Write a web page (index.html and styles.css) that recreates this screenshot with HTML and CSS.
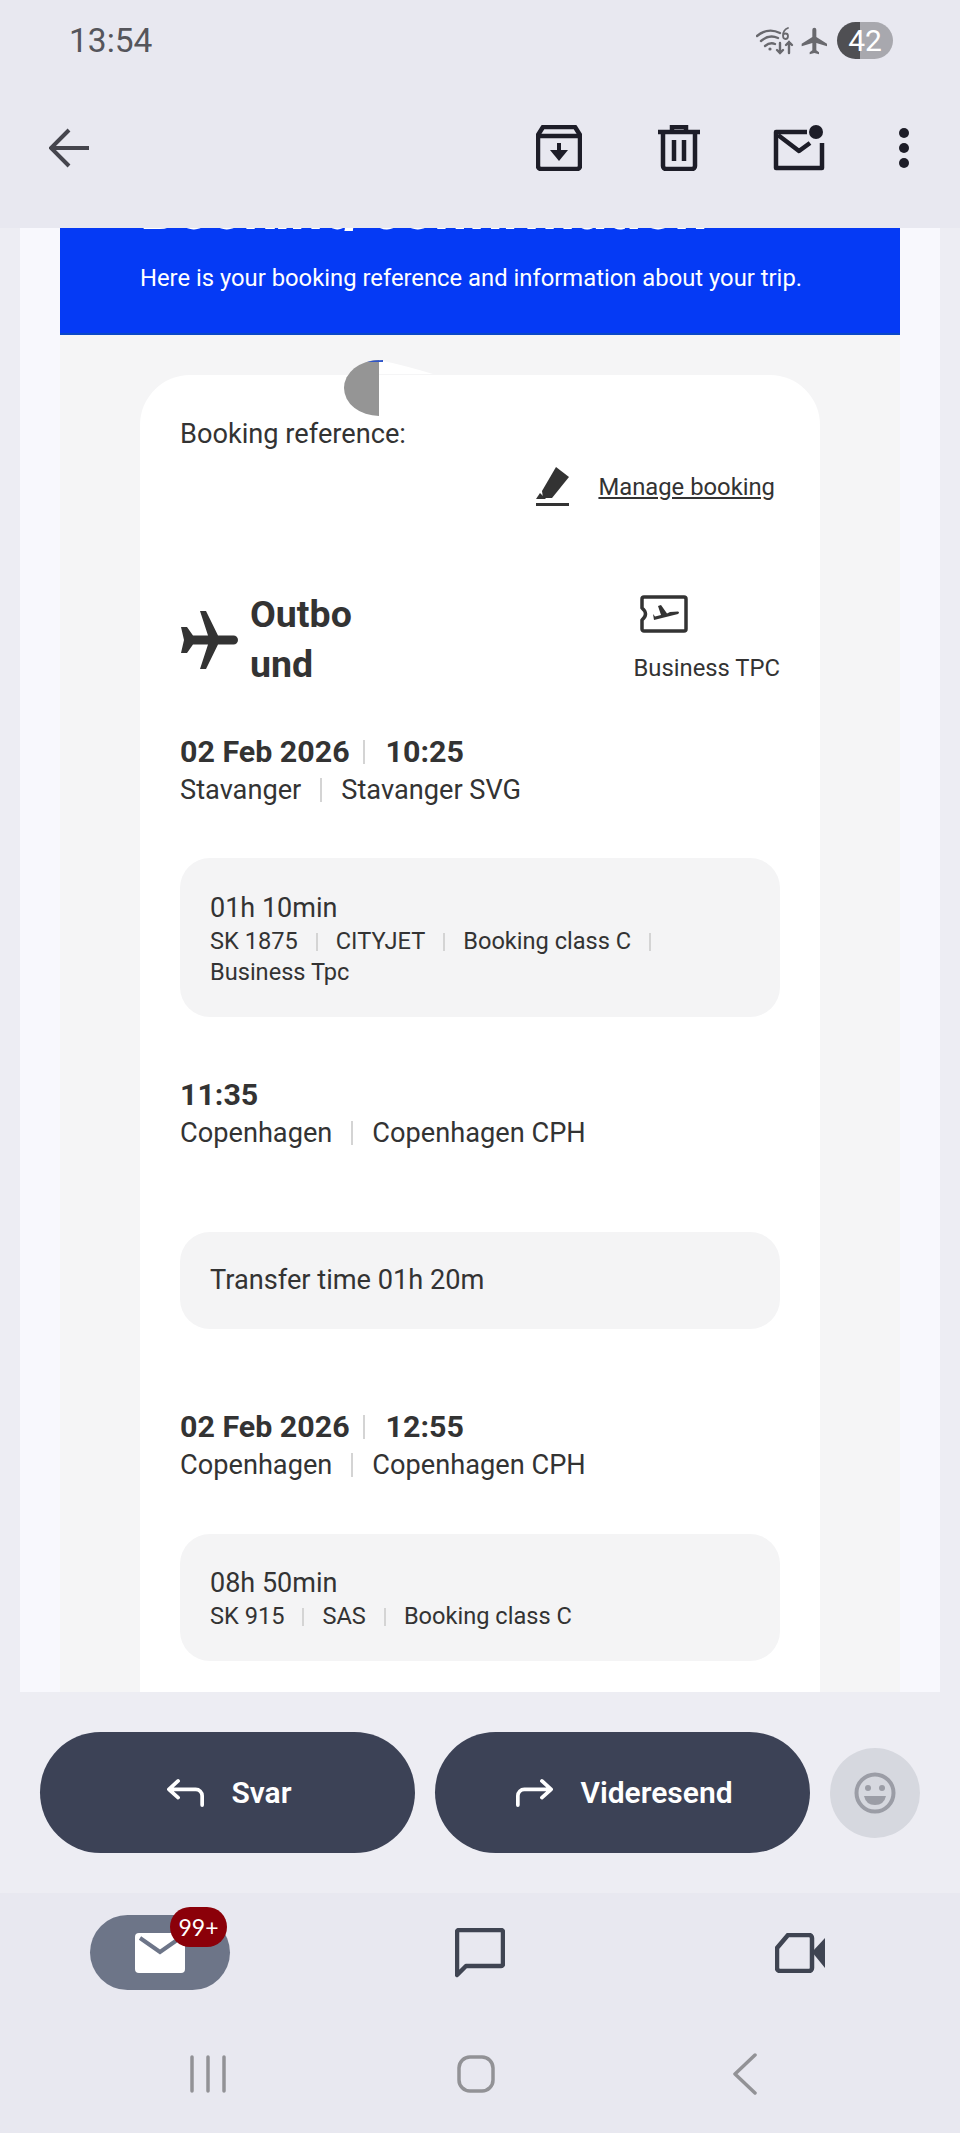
FILE: index.html
```html
<!DOCTYPE html>
<html lang="en">
<head>
    <meta charset="UTF-8">
    <meta name="viewport" content="width=device-width, initial-scale=1.0">
    <title>Booking confirmation</title>
    <link rel="stylesheet" href="styles.css">
</head>
<body>
<div class="phone">
    <div class="topbar">
        <div class="status">
            <span class="clock">13:54</span>
            <div class="status-icons">
                <svg class="wifi" viewBox="0 0 38 28" fill="none" stroke="#69696e" stroke-width="2.4" stroke-linecap="round">
                    <path d="M1 9Q12 0 24 6"/>
                    <path d="M5 14Q13 7 22 11"/>
                    <path d="M9 19Q14 15 19 17"/>
                    <circle cx="14" cy="22" r="1.6" fill="#69696e" stroke="none"/>
                    <path d="M24 16V26M21 23l3 3 3-3M33 26V15M30 18l3-3 3 3"/>
                    <path d="M32 1Q27 3 27 8.500Q27 12 29.500 12Q32 12 32 9Q32 6.500 29.500 6.500Q27.500 6.500 27 8.500" stroke-width="1.800"/>
                </svg>
                <svg class="air" viewBox="0 0 24 24" fill="#69696e"><path d="M21 16v-2l-8-5V3.500a1.500 1.500 0 0 0-3 0V9l-8 5v2l8-2.500V19l-2 1.500V22l3.500-1 3.500 1v-1.500L13 19v-5.500z"/></svg>
                <div class="battery"><span>42</span></div>
            </div>
        </div>
        <div class="toolbar">
            <svg class="back" viewBox="0 0 40 40" fill="none" stroke="#45454d" stroke-width="4"><path d="M40 20H3M20 2L2 20l18 18"/></svg>
            <div class="actions">
                <svg class="archive" viewBox="0 0 46 46" fill="none" stroke="#1d1d28" stroke-width="4.500" stroke-linejoin="round">
                    <path d="M7 2h32l5 8v31a3 3 0 0 1-3 3H5a3 3 0 0 1-3-3V10z"/>
                    <path d="M2 11h42"/>
                    <path d="M23 18v14" stroke-width="4"/>
                    <path d="M14 25h18l-9 11z" fill="#1d1d28" stroke="none"/>
                </svg>
                <svg class="trash" viewBox="0 0 42 46" fill="none" stroke="#1d1d28" stroke-width="4.500">
                    <path d="M0 7h42M14 7V2h14v5" />
                    <path d="M5 7v34a3 3 0 0 0 3 3h26a3 3 0 0 0 3-3V7"/>
                    <path d="M16 15v21M26 15v21"/>
                </svg>
                <svg class="unread" viewBox="0 0 52 46" fill="none" stroke="#1d1d28" stroke-width="4.500" stroke-linejoin="round">
                    <path d="M34 7H3v36h46V18"/>
                    <path d="M5 10l21 16 11-8"/>
                    <circle cx="43" cy="7" r="7" fill="#1d1d28" stroke="none"/>
                </svg>
                <div class="dots"><i></i><i></i><i></i></div>
            </div>
        </div>
    </div>

    <div class="mail-view">
        <div class="mail-frame">
            <div class="mail-inner">
                <div class="hero">
                    <h1>Booking confirmation</h1>
                    <p>Here is your booking reference and information about your trip.</p>
                </div>
                <div class="sheet">
                    <div class="card">
                        <svg class="scroll-thumb" viewBox="0 0 90 58">
                            <path d="M36 0Q60 5 90 14L36 14z" fill="#fff"/>
                            <path d="M36 56A35 28 0 0 1 36 0z" fill="#959595"/>
                            <path d="M24 2Q30 0 40 0V2z" fill="#2f55c8"/>
                        </svg>
                        <div class="reference">Booking reference:</div>
                        <div class="manage">
                            <svg class="pencil" viewBox="0 0 34 40" fill="#333">
                                <path d="M20 0l13 10-17 21H7l-1-7z"/>
                                <path d="M4 26l6 6H0z"/>
                                <rect x="0" y="36" width="33" height="3"/>
                            </svg>
                            <a href="#">Manage booking</a>
                        </div>
                        <div class="leg-head">
                            <div class="leg-title">
                                <svg class="plane" viewBox="0 0 58 58" fill="#333"><path d="M58 29a4.500 4.500 0 0 0-4.500-4.500H38L26 0h-6l8 24.500H13L7 16H1l3 13-3 13h6l6-8.500h15l-8 24.500h6l12-24.500h15.500a4.500 4.500 0 0 0 4.500-4.500z"/></svg>
                                <h2>Outbo<br>und</h2>
                            </div>
                            <div class="cabin">
                                <svg class="ticket" viewBox="0 0 48 38" fill="none" stroke="#333" stroke-width="3.500" stroke-linejoin="round">
                                    <path d="M4 2h40a2 2 0 0 1 2 2v30a2 2 0 0 1-2 2H4a2 2 0 0 1-2-2v-9q7-6 0-12V4a2 2 0 0 1 2-2z"/>
                                    <path d="M14 25L38 19q2-1.500 0-2.500L30 17l-3 1.500L21 10l-3 1 3 9-6 1.500L13 19z" fill="#333" stroke="none"/>
                                </svg>
                                <span>Business TPC</span>
                            </div>
                        </div>

                        <div class="time-row first"><span>02 Feb 2026</span><i class="bar"></i><span>10:25</span></div>
                        <div class="place-row"><span>Stavanger</span><i class="bar"></i><span>Stavanger SVG</span></div>

                        <div class="info-box flight-one">
                            <div class="duration">01h 10min</div>
                            <div class="details">
                                <span>SK 1875</span><i class="bar"></i><span>CITYJET</span><i class="bar"></i><span>Booking class C</span><i class="bar"></i>
                                <span>Business Tpc</span>
                            </div>
                        </div>

                        <div class="time-row arrival"><span>11:35</span></div>
                        <div class="place-row"><span>Copenhagen</span><i class="bar"></i><span>Copenhagen CPH</span></div>

                        <div class="info-box transfer">Transfer time 01h 20m</div>

                        <div class="time-row second"><span>02 Feb 2026</span><i class="bar"></i><span>12:55</span></div>
                        <div class="place-row"><span>Copenhagen</span><i class="bar"></i><span>Copenhagen CPH</span></div>

                        <div class="info-box flight-two">
                            <div class="duration">08h 50min</div>
                            <div class="details">
                                <span>SK 915</span><i class="bar"></i><span>SAS</span><i class="bar"></i><span>Booking class C</span>
                            </div>
                        </div>
                    </div>
                </div>
            </div>
        </div>
    </div>

    <div class="reply-bar">
        <button class="reply-btn">
            <svg class="reply-icon" viewBox="0 0 40 30" fill="none" stroke="#fff" stroke-width="4" stroke-linecap="round" stroke-linejoin="round"><path d="M12 2L2 11l10 9M3 11h28a7 7 0 0 1 7 7v10"/></svg>
            Svar
        </button>
        <button class="reply-btn forward">
            <svg class="reply-icon" viewBox="0 0 40 30" fill="none" stroke="#fff" stroke-width="4" stroke-linecap="round" stroke-linejoin="round"><path d="M28 2l10 9-10 9M37 11H9a7 7 0 0 0-7 7v10"/></svg>
            Videresend
        </button>
        <div class="emoji">
            <svg viewBox="0 0 42 42" fill="none">
                <circle cx="21" cy="21" r="18.500" stroke="#9b9da6" stroke-width="4"/>
                <circle cx="14" cy="16" r="3" fill="#9b9da6"/>
                <circle cx="28" cy="16" r="3" fill="#9b9da6"/>
                <path d="M10 24h22q-2 9-11 9t-11-9z" fill="#9b9da6"/>
            </svg>
        </div>
    </div>

    <div class="tabbar">
        <div class="tab">
            <div class="tab-active">
                <svg class="mail-icon" viewBox="0 0 50 40">
                    <rect width="50" height="40" rx="4" fill="#fff"/>
                    <path d="M5 5l20 14 20-14" fill="none" stroke="#6d7588" stroke-width="4"/>
                </svg>
                <span class="badge">99+</span>
            </div>
        </div>
        <div class="tab">
            <svg class="tab-icon" viewBox="0 0 50 50" fill="none" stroke="#3f4452" stroke-width="4.500"><path d="M2 47V4a2 2 0 0 1 2-2h42a2 2 0 0 1 2 2v32a2 2 0 0 1-2 2H11z" stroke-linejoin="round"/></svg>
        </div>
        <div class="tab">
            <svg class="tab-icon video" viewBox="0 0 50 40" fill="none" stroke="#3f4452" stroke-width="4.500" stroke-linejoin="round"><path d="M13 2h21a3 3 0 0 1 3 3v30a3 3 0 0 1-3 3H5a3 3 0 0 1-3-3V15z"/><path d="M37 19L50 5v30z" fill="#3f4452" stroke="none"/></svg>
        </div>
    </div>

    <div class="navbar">
        <svg class="nav-recents" viewBox="0 0 36 38" stroke="#929296" stroke-width="3.500" stroke-linecap="round"><path d="M2 2v34M18 2v34M34 2v34"/></svg>
        <svg class="nav-home" viewBox="0 0 38 38" fill="none" stroke="#929296" stroke-width="3.500"><rect x="2" y="2" width="34" height="34" rx="11"/></svg>
        <svg class="nav-back" viewBox="0 0 24 42" fill="none" stroke="#929296" stroke-width="3.500" stroke-linecap="round" stroke-linejoin="round"><path d="M22 2L2 21l20 19"/></svg>
    </div>
</div>
</body>
</html>
```

FILE: styles.css
```css
* {
    box-sizing: border-box;
}
body {
    margin: 0;
    font-family: Roboto, "Liberation Sans", sans-serif;
    background-color: #e8e8f0;
}
.phone {
    display: flex;
    flex-direction: column;
    width: 960px;
    height: 2133px;
    overflow: hidden;
}

/* status bar and mail toolbar */
.topbar {
    height: 228px;
    flex-shrink: 0;
    padding-top: 22px;
    background-color: #e8e8f0;
}
.status {
    display: flex;
    justify-content: space-between;
    align-items: center;
    height: 37px;
    padding: 0 67px 0 69px;
}
.clock {
    font-size: 33.5px;
    color: #55555b;
}
.status-icons {
    display: flex;
    align-items: center;
}
.wifi {
    width: 38px;
    height: 28px;
    margin-right: 5px;
}
.air {
    width: 32px;
    height: 32px;
    margin-right: 6px;
}
.battery {
    width: 56px;
    height: 37px;
    border-radius: 19px;
    background: linear-gradient(to right, #4f4f53 0, #4f4f53 41%, #a8a8ae 41%);
    color: #fff;
    font-size: 30px;
    line-height: 37px;
    text-align: center;
}
.toolbar {
    display: flex;
    justify-content: space-between;
    align-items: center;
    padding: 0 51px 0 49px;
    margin-top: 65px;
    height: 48px;
}
.back {
    width: 40px;
    height: 40px;
}
.actions {
    display: flex;
    align-items: center;
}
.archive {
    width: 46px;
    height: 46px;
    margin-right: 76px;
}
.trash {
    width: 42px;
    height: 46px;
    margin-right: 73px;
}
.unread {
    width: 52px;
    height: 46px;
    margin-right: 74px;
}
.dots {
    display: flex;
    flex-direction: column;
    gap: 5px;
}
.dots i {
    width: 10px;
    height: 10px;
    border-radius: 50%;
    background-color: #1d1d28;
}

/* mail body, scrolled a bit */
.mail-view {
    height: 1464px;
    flex-shrink: 0;
    padding: 0 20px;
    background-color: #ededf3;
}
.mail-frame {
    height: 100%;
    background-color: #f8f8fd;
    overflow: hidden;
}
.mail-inner {
    margin: -70px 40px 0;
}
.hero {
    height: 177px;
    background-color: #053af5;
    color: #fff;
    padding: 21px 80px 0;
    border-bottom: 2px solid #0a48c8;
}
.hero h1 {
    margin: 0;
    height: 52px;
    overflow: hidden;
    font-size: 58.5px;
    line-height: 60px;
    font-weight: 700;
    white-space: nowrap;
}
.hero p {
    margin: 31px 0 0;
    font-size: 23.8px;
    line-height: 32px;
    white-space: nowrap;
}
.sheet {
    background-color: #f5f5f6;
    padding: 40px 80px 40px;
}
.card {
    position: relative;
    background-color: #fff;
    border-radius: 50px 50px 0 0;
    padding: 41px 40px 40px 40px;
    color: #333;
}
.scroll-thumb {
    position: absolute;
    left: 203px;
    top: -15px;
    width: 90px;
    height: 58px;
}
.reference {
    font-size: 27.2px;
    line-height: 36px;
}
.manage {
    display: flex;
    justify-content: flex-end;
    align-items: center;
    height: 40px;
    margin-top: 15px;
    padding-right: 5px;
}
.pencil {
    width: 34px;
    height: 40px;
    margin-right: 28px;
}
.manage a {
    color: #333;
    font-size: 23.8px;
}
.leg-head {
    display: flex;
    justify-content: space-between;
    margin-top: 82px;
}
.leg-title {
    display: flex;
    align-items: center;
}
.plane {
    width: 58px;
    height: 58px;
    margin: 2px 12px 0 0;
}
.leg-title h2 {
    margin: 0;
    font-size: 37.5px;
    line-height: 50px;
    font-weight: 700;
}
.cabin {
    display: flex;
    flex-direction: column;
    align-items: flex-start;
    font-size: 23.8px;
    line-height: 32px;
    padding-top: 6px;
}
.ticket {
    width: 48px;
    height: 38px;
    margin: 0 0 19px 6px;
}
.time-row {
    display: flex;
    align-items: center;
    font-size: 30.4px;
    line-height: 36px;
    font-weight: 700;
    margin-top: 45px;
}
.time-row .bar {
    margin: 0 21px 0 13px;
}
.time-row.arrival {
    margin-top: 60px;
}
.time-row.second {
    margin-top: 80px;
}
.place-row {
    display: flex;
    align-items: center;
    font-size: 27.2px;
    line-height: 36px;
    margin-top: 2px;
}
.bar {
    display: inline-block;
    width: 2px;
    height: 24px;
    margin: 0 19px;
    background-color: #d4d4d4;
    vertical-align: -4px;
}
.info-box {
    background-color: #f4f4f5;
    border-radius: 30px;
    padding: 28px 30px;
    margin-top: 50px;
}
.flight-one {
    height: 159px;
}
.flight-two {
    height: 127px;
    margin-top: 51px;
    padding-top: 27px;
}
.transfer {
    height: 97px;
    padding: 0 30px;
    margin-top: 81px;
    font-size: 27.2px;
    line-height: 97px;
}
.duration {
    font-size: 27px;
    line-height: 36px;
    margin-top: 4px;
}
.details {
    font-size: 23.6px;
    line-height: 31px;
}
.details .bar {
    height: 18px;
    margin: 0 18px;
    vertical-align: -2px;
}

/* reply and forward */
.reply-bar {
    display: flex;
    align-items: center;
    height: 201px;
    flex-shrink: 0;
    padding-left: 40px;
    background-color: #ededf3;
}
.reply-btn {
    display: flex;
    align-items: center;
    justify-content: center;
    gap: 27px;
    width: 375px;
    height: 121px;
    padding-left: 10px;
    border: none;
    border-radius: 61px;
    background-color: #3c4256;
    color: #fff;
    font-family: Roboto, sans-serif;
    font-size: 30px;
    font-weight: 600;
    margin-right: 20px;
}
.reply-icon {
    width: 37px;
    height: 30px;
}
.emoji {
    display: flex;
    align-items: center;
    justify-content: center;
    width: 90px;
    height: 90px;
    border-radius: 50%;
    background-color: #d6d8df;
}
.emoji svg {
    width: 42px;
    height: 42px;
}

/* bottom tabs */
.tabbar {
    display: grid;
    grid-template-columns: 320px 320px 320px;
    height: 122px;
    flex-shrink: 0;
    padding-top: 22px;
    background-color: #e8e8f0;
}
.tab {
    display: flex;
    justify-content: center;
    height: 75px;
    align-items: center;
}
.tab-active {
    position: relative;
    display: flex;
    align-items: center;
    justify-content: center;
    width: 140px;
    height: 75px;
    border-radius: 38px;
    background-color: #6d7588;
}
.mail-icon {
    width: 50px;
    height: 40px;
}
.badge {
    position: absolute;
    top: -8px;
    right: 3px;
    width: 57px;
    height: 40px;
    border-radius: 20px;
    background-color: #8b0009;
    color: #fff;
    font-family: Lato, sans-serif;
    font-size: 23px;
    line-height: 40px;
    text-align: center;
}
.tab-icon {
    width: 50px;
    height: 50px;
}
.tab-icon.video {
    height: 40px;
}

/* android nav buttons */
.navbar {
    display: flex;
    align-items: center;
    flex: 1;
    padding-left: 190px;
    background-color: #e8e8f0;
}
.nav-recents {
    width: 36px;
    height: 38px;
    margin-right: 231px;
}
.nav-home {
    width: 38px;
    height: 38px;
    margin-right: 238px;
}
.nav-back {
    width: 24px;
    height: 42px;
}
```
